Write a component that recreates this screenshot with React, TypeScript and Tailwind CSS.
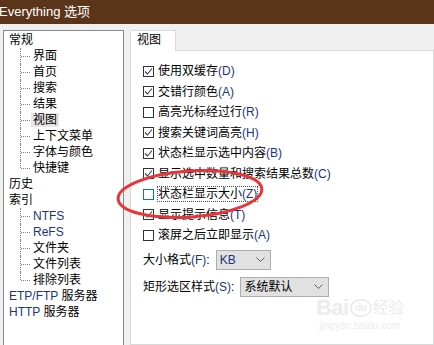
import React from "react";

const font = "font-['Liberation_Sans','Noto_Sans_CJK_SC',sans-serif]";

type Node = { label: React.ReactNode; children?: React.ReactNode[]; };

const Latin = ({ children }: { children: React.ReactNode }) => (
  <span className="text-[#1d3478]">{children}</span>
);

const tree: Node[] = [
  {
    label: "常规",
    children: ["界面", "首页", "搜索", "结果", "视图", "上下文菜单", "字体与颜色", "快捷键"],
  },
  { label: "历史" },
  {
    label: "索引",
    children: [<Latin key="n">NTFS</Latin>, <Latin key="r">ReFS</Latin>, "文件夹", "文件列表", "排除列表"],
  },
  { label: <span><Latin>ETP/FTP</Latin> 服务器</span> },
  { label: <span><Latin>HTTP</Latin> 服务器</span> },
];

const TreeChild = ({ label, last, selected }: { label: React.ReactNode; last: boolean; selected?: boolean }) => (
  <div className="relative h-4 flex items-center pl-[22px]">
    {/* dotted connectors */}
    <span
      className={`absolute left-[11px] top-0 border-l border-dotted border-[#7f7f7f] ${last ? "h-2" : "h-4"}`}
    />
    <span className="absolute left-[12px] top-2 w-[9px] border-t border-dotted border-[#7f7f7f]" />
    <span className={`px-[2px] leading-[14px] ${selected ? "bg-[#e5e5e5]" : ""}`}>{label}</span>
  </div>
);

const Check = ({ checked, focused, label }: { checked: boolean; focused?: boolean; label: React.ReactNode }) => (
  <div className="h-[20.5px] flex items-center">
    <span
      className={`w-[11px] h-[11px] border bg-white flex items-center justify-center ${
        focused ? "border-[#0078d7]" : "border-[#333333]"
      }`}
    >
      {checked && (
        <svg width="9" height="9" viewBox="0 0 9 9">
          <polyline points="1,4.5 3.5,7 8,1.5" fill="none" stroke="#3c3c3c" strokeWidth="1.1" />
        </svg>
      )}
    </span>
    <span className={`ml-[4px] leading-[14px] ${focused ? "outline outline-1 outline-dotted outline-[#555]" : ""}`}>
      {label}
    </span>
  </div>
);

const Key = ({ k }: { k: string }) => (
  <span className="text-[#1d3478]">({k})</span>
);

const Chevron = () => (
  <svg width="9" height="5" viewBox="0 0 9 5">
    <polyline points="0.5,0.5 4.5,4.5 8.5,0.5" fill="none" stroke="#606060" strokeWidth="1" />
  </svg>
);

export default function App() {
  const checks = [
    { c: true, t: "使用双缓存", k: "D" },
    { c: true, t: "交错行颜色", k: "A" },
    { c: false, t: "高亮光标经过行", k: "R" },
    { c: true, t: "搜索关键词高亮", k: "H" },
    { c: true, t: "状态栏显示选中内容", k: "B" },
    { c: true, t: "显示选中数量和搜索结果总数", k: "C" },
    { c: false, t: "状态栏显示大小", k: "Z", f: true },
    { c: true, t: "显示提示信息", k: "T" },
    { c: false, t: "滚屏之后立即显示", k: "A" },
  ];

  return (
    <div className={`${font} relative w-[434px] h-[345px] overflow-hidden bg-[#f0f0f0] text-[12px] text-black flex flex-col`}>
      {/* Title bar */}
      <div className="h-6 shrink-0 bg-[#5b351a] text-white text-[13px] leading-6 -ml-[1px]">Everything 选项</div>

      <div className="flex flex-1 pt-[6px] pl-[3px] min-h-0">
        {/* Tree */}
        <div className="w-[121px] h-[340px] shrink-0 bg-white border border-[#828790] pt-[1px] pl-[5px]">
          {tree.map((n, i) => (
            <div key={i}>
              <div className="h-4 flex items-center leading-[14px]">{n.label}</div>
              {n.children?.map((c, j) => (
                <TreeChild
                  key={j}
                  label={c}
                  last={j === n.children!.length - 1}
                  selected={c === "视图"}
                />
              ))}
            </div>
          ))}
        </div>

        {/* Tab area */}
        <div className="ml-[6px] flex-1 flex flex-col">
          <div className="relative z-10 w-[46px] h-[21px] -mb-px bg-white border border-b-0 border-[#d9d9d9] pl-[6px] pt-[2px] leading-[14px]">
            视图
          </div>
          <div className="flex-1 bg-white border border-[#d9d9d9] pt-[10px] pl-[12px]">
            {checks.map((r, i) => (
              <Check
                key={i}
                checked={r.c}
                focused={r.f}
                label={
                  <>
                    {r.t}
                    <Key k={r.k} />
                  </>
                }
              />
            ))}

            <div className="mt-[4px] flex items-center">
              <span>
                大小格式<Key k="F" />:
              </span>
              <div className="ml-[6px] w-[55px] h-5 bg-[#e1e1e1] border border-[#adadad] flex items-center justify-between pl-[3px] pr-[5px]">
                <span className="text-[#1d3478]">KB</span>
                <Chevron />
              </div>
            </div>

            <div className="mt-[7px] flex items-center">
              <span>
                矩形选区样式<Key k="S" />:
              </span>
              <div className="ml-[6px] w-[89px] h-5 bg-[#e1e1e1] border border-[#adadad] flex items-center justify-between pl-[3px] pr-[5px]">
                <span>系统默认</span>
                <Chevron />
              </div>
            </div>
          </div>
        </div>
      </div>

      {/* red annotation ellipse */}
      <svg className="absolute left-0 top-0 pointer-events-none" width="434" height="345">
        <ellipse
          cx="190"
          cy="194"
          rx="72"
          ry="23"
          transform="rotate(-4 190 194)"
          fill="none"
          stroke="#e8353a"
          strokeWidth="3"
        />
      </svg>

      {/* watermark */}
      <div className="absolute left-[316px] top-[296px] flex flex-col items-center text-[#ececec] pointer-events-none">
        <div className="flex items-center font-bold text-[22px] leading-[24px] tracking-tight">
          <span>Bai</span>
          <span className="mx-[1px] w-[22px] h-[18px] rounded-full border-2 border-[#ececec] text-[10px] leading-[14px] text-center">
            du
          </span>
          <span className="text-[16px] font-normal">经验</span>
        </div>
        <div className="text-[10px] leading-[12px]">jingyan.baidu.com</div>
      </div>
    </div>
  );
}
